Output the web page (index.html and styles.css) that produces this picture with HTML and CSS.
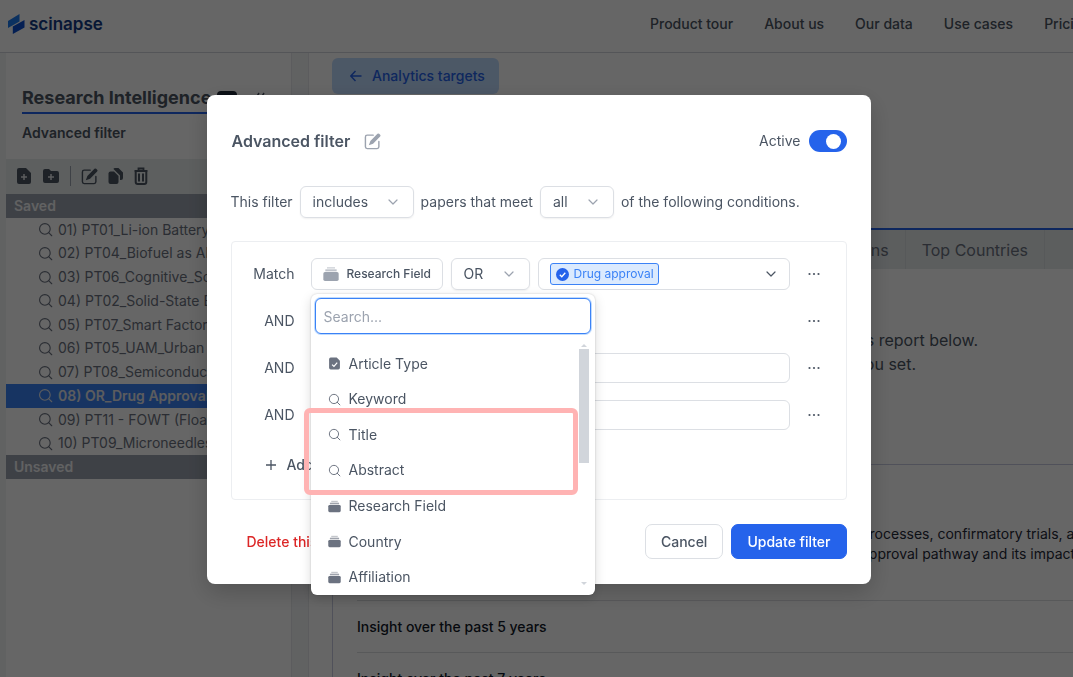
FILE: index.html
```html
<!DOCTYPE html>
<html lang="en">
<head>
    <meta charset="utf-8">
    <title>Scinapse - Research Intelligence</title>
    <link rel="stylesheet" href="styles.css">
</head>
<body>
    <!-- Shared icons -->
    <svg class="sprite" aria-hidden="true">
        <symbol id="i-search" viewBox="0 0 24 24">
            <circle cx="11" cy="11" r="8.500" fill="none" stroke="currentColor" stroke-width="1.800"/>
            <path d="M17 17l5 5" fill="none" stroke="currentColor" stroke-width="1.800" stroke-linecap="round"/>
        </symbol>
        <symbol id="i-chevron" viewBox="0 0 24 24">
            <path d="M4 8l8 8 8-8" fill="none" stroke="currentColor" stroke-width="2.400" stroke-linecap="round" stroke-linejoin="round"/>
        </symbol>
        <symbol id="i-stack" viewBox="0 0 24 24">
            <path d="M6 1.500h12v2.500H6z" fill="currentColor" opacity=".4"/>
            <path d="M3.500 5h17v3h-17z" fill="currentColor" opacity=".65"/>
            <path d="M3 9h18q2.500 0 2.500 2.500v8.500q0 2.500-2.500 2.500H3Q.5 22.500.5 20v-8.500Q.5 9 3 9z" fill="currentColor"/>
        </symbol>
        <symbol id="i-edit" viewBox="0 0 24 24">
            <path d="M13 3H4.500Q2 3 2 5.500v14Q2 22 4.500 22h14q2.500 0 2.500-2.500V12" fill="none" stroke="currentColor" stroke-width="2" stroke-linecap="round"/>
            <path d="M19 1.200q1.200-1.200 2.400 0l1.400 1.400q1.200 1.200 0 2.400L12.800 15l-6 2.200L9 11.200z" fill="currentColor"/>
        </symbol>
        <symbol id="i-dots" viewBox="0 0 24 24">
            <circle cx="3" cy="12" r="2.200" fill="currentColor"/>
            <circle cx="12" cy="12" r="2.200" fill="currentColor"/>
            <circle cx="21" cy="12" r="2.200" fill="currentColor"/>
        </symbol>
    </svg>

    <header class="topbar">
        <a class="logo" href="#">
            <svg width="17" height="20" viewBox="0 0 17 20">
                <path d="M0 7L11.500 0v7.500L0 14z" fill="#1d7bf0"/>
                <path d="M16.500 6v7.500L4.800 20v-7.500z" fill="#0a4fd0"/>
            </svg>
            <span>scinapse</span>
        </a>
        <nav class="topnav">
            <a href="#">Product tour</a>
            <a href="#">About us</a>
            <a href="#">Our data</a>
            <a href="#">Use cases</a>
            <a href="#">Pricing</a>
        </nav>
    </header>

    <div class="page">
        <aside class="sidebar">
            <div class="side-head">
                <h2>Research Intelligence <span class="badge"></span> <svg class="collapse" width="10" height="12" viewBox="0 0 10 12"><path d="M4 1L1 6l3 5M9 1L6 6l3 5" fill="none" stroke="currentColor" stroke-width="1.500"/></svg></h2>
                <h3>Advanced filter</h3>
            </div>
            <div class="toolbar">
                <button aria-label="New filter">
                    <svg width="16" height="18" viewBox="0 0 16 18"><path d="M3 1h7l5 5v9q0 2-2 2H3q-2 0-2-2V3q0-2 2-2z" fill="currentColor"/><path d="M8 7v6M5 10h6" stroke="#e5e7eb" stroke-width="1.500"/></svg>
                </button>
                <button aria-label="New folder">
                    <svg width="18" height="18" viewBox="0 0 18 18"><path d="M3 2h4l2 2h6q2 0 2 2v8q0 2-2 2H3q-2 0-2-2V4q0-2 2-2z" fill="currentColor"/><path d="M9 7v6M6 10h6" stroke="#e5e7eb" stroke-width="1.500"/></svg>
                </button>
                <span class="divider"></span>
                <button aria-label="Rename"><svg width="17" height="17"><use href="#i-edit"/></svg></button>
                <button aria-label="Duplicate">
                    <svg width="16" height="18" viewBox="0 0 16 18"><path d="M2.500 4.500H6l4.500 4.500v6q0 2-2 2h-6q-2 0-2-2v-8.500q0-2 2-2z" fill="currentColor"/><path d="M5.500 2q0-1 1.500-1h3.500L15 5.500V11q0 2-2 2h-1V8.500z" fill="currentColor"/></svg>
                </button>
                <button aria-label="Delete">
                    <svg width="14" height="18" viewBox="0 0 14 18"><path d="M.5 4h13M4.500 3.500V1.500h5v2" fill="none" stroke="currentColor" stroke-width="1.800"/><path d="M1.700 5v10q0 2 2 2h6.600q2 0 2-2V5M5 6.500v8M9 6.500v8" fill="none" stroke="currentColor" stroke-width="2"/></svg>
                </button>
            </div>
            <ul class="filters">
                <li class="group">Saved</li>
                <li><svg><use href="#i-search"/></svg>01) PT01_Li-ion Battery</li>
                <li><svg><use href="#i-search"/></svg>02) PT04_Biofuel as Alternative</li>
                <li><svg><use href="#i-search"/></svg>03) PT06_Cognitive_Science</li>
                <li><svg><use href="#i-search"/></svg>04) PT02_Solid-State Battery</li>
                <li><svg><use href="#i-search"/></svg>05) PT07_Smart Factory</li>
                <li><svg><use href="#i-search"/></svg>06) PT05_UAM_Urban Air</li>
                <li><svg><use href="#i-search"/></svg>07) PT08_Semiconductor</li>
                <li class="selected"><svg><use href="#i-search"/></svg>08) OR_Drug Approval</li>
                <li><svg><use href="#i-search"/></svg>09) PT11 - FOWT (Floating)</li>
                <li><svg><use href="#i-search"/></svg>10) PT09_Microneedles</li>
                <li class="group">Unsaved</li>
            </ul>
        </aside>

        <main class="report">
            <a class="back" href="#">
                <svg width="12" height="12" viewBox="0 0 12 12"><path d="M11.500 6H1M5.500 1L.8 6l4.700 5" fill="none" stroke="currentColor" stroke-width="1.400"/></svg>
                Analytics targets
            </a>
            <div class="tabs">
                <a href="#">Top Institutions</a>
                <a href="#">Top Countries</a>
                <span class="tab-end"></span>
            </div>
            <div class="intro">
                <p class="line-one">this report below.</p>
                <p class="line-two">you set.</p>
            </div>
            <section class="insights">
                <p class="summary">processes, confirmatory trials, and<br>approval pathway and its impact on</p>
                <h4>Insight over the past 5 years</h4>
                <h4>Insight over the past 7 years</h4>
            </section>
        </main>
    </div>

    <div class="overlay">
        <form class="modal" role="dialog" aria-label="Advanced filter">
            <div class="modal-head">
                <h1>Advanced filter</h1>
                <button type="button" class="icon-btn" aria-label="Edit name"><svg width="17" height="17"><use href="#i-edit"/></svg></button>
                <label class="active-label" for="active">Active</label>
                <input class="toggle" type="checkbox" id="active" checked>
            </div>

            <div class="sentence">
                <label for="mode">This filter</label>
                <span class="select mode">
                    <select id="mode"><option>includes</option><option>excludes</option></select>
                    <svg><use href="#i-chevron"/></svg>
                </span>
                <label for="meet">papers that meet</label>
                <span class="select meet">
                    <select id="meet"><option>all</option><option>any</option></select>
                    <svg><use href="#i-chevron"/></svg>
                </span>
                <span>of the following conditions.</span>
            </div>

            <div class="conditions">
                <div class="row">
                    <span class="join">Match</span>
                    <div class="field-wrap">
                        <button type="button" class="field"><svg width="16" height="16"><use href="#i-stack"/></svg>Research Field</button>

                        <div class="dropdown">
                            <input type="text" placeholder="Search..." aria-label="Search fields">
                            <div class="options">
                                <div class="option-list">
                                    <button type="button"><svg viewBox="0 0 24 24"><path d="M5 1h11l6 6v13q0 3-3 3H5q-3 0-3-3V4q0-3 3-3z" fill="currentColor"/><path d="M7.500 14l3.500 3.500 6-7" fill="none" stroke="#fff" stroke-width="2.200"/></svg>Article Type</button>
                                    <button type="button"><svg><use href="#i-search"/></svg>Keyword</button>
                                    <button type="button"><svg><use href="#i-search"/></svg>Title</button>
                                    <button type="button"><svg><use href="#i-search"/></svg>Abstract</button>
                                    <button type="button"><svg><use href="#i-stack"/></svg>Research Field</button>
                                    <button type="button"><svg><use href="#i-stack"/></svg>Country</button>
                                    <button type="button"><svg><use href="#i-stack"/></svg>Affiliation</button>
                                </div>
                                <div class="scrollbar">
                                    <span class="arrow up"></span>
                                    <span class="thumb"></span>
                                    <span class="arrow down"></span>
                                </div>
                            </div>
                            <div class="highlight"></div>
                        </div>
                    </div>
                    <span class="select op">
                        <select aria-label="Operator"><option>OR</option><option>AND</option></select>
                        <svg><use href="#i-chevron"/></svg>
                    </span>
                    <button type="button" class="values">
                        <span class="tag">
                            <svg width="13" height="13" viewBox="0 0 13 13"><circle cx="6.500" cy="6.500" r="6.500" fill="#2563eb"/><path d="M3.800 6.800l2 2 3.500-4" fill="none" stroke="#fff" stroke-width="1.300"/></svg>
                            Drug approval
                        </span>
                        <svg class="caret"><use href="#i-chevron"/></svg>
                    </button>
                    <button type="button" class="more" aria-label="More"><svg><use href="#i-dots"/></svg></button>
                </div>
                <div class="row">
                    <span class="join">AND</span>
                    <button type="button" class="more" aria-label="More"><svg><use href="#i-dots"/></svg></button>
                </div>
                <div class="row">
                    <span class="join">AND</span>
                    <input class="text" type="text" aria-label="Third condition">
                    <button type="button" class="more" aria-label="More"><svg><use href="#i-dots"/></svg></button>
                </div>
                <div class="row">
                    <span class="join">AND</span>
                    <input class="text" type="text" aria-label="Fourth condition">
                    <button type="button" class="more" aria-label="More"><svg><use href="#i-dots"/></svg></button>
                </div>
                <button type="button" class="add">
                    <svg width="10" height="10" viewBox="0 0 10 10"><path d="M5 0v10M0 5h10" stroke="currentColor" stroke-width="1.300"/></svg>
                    Add condition
                </button>
            </div>

            <div class="modal-foot">
                <button type="button" class="delete">Delete this filter</button>
                <button type="button" class="btn">Cancel</button>
                <button type="submit" class="btn primary">Update filter</button>
            </div>
        </form>
    </div>
</body>
</html>
```
FILE: styles.css
```css
* {
    box-sizing: border-box;
}

body {
    margin: 0;
    height: 100vh;
    overflow: hidden;
    font-family: Inter, "Liberation Sans", sans-serif;
    font-size: 14px;
    line-height: 20px;
    color: #4b5563;
    background: #f3f4f6;
}

h1, h2, h3, h4, p, ul {
    margin: 0;
    padding: 0;
}

a {
    color: inherit;
    text-decoration: none;
}

button, input, select {
    font: inherit;
    color: inherit;
    margin: 0;
}

button {
    padding: 0;
    border: 0;
    background: none;
}

svg {
    flex: none;
}

.sprite {
    display: none;
}

/* Top bar */
.topbar {
    display: flex;
    height: 53px;
    align-items: center;
    padding-bottom: 4px;
    background: white;
    border-bottom: 1px solid #d1d5db;
}

.logo {
    display: flex;
    flex: 0 0 642px;
    align-items: center;
    gap: 4px;
    margin-right: 8px;
    padding-left: 8px;
    font-size: 17px;
    font-weight: 600;
    color: #123a85;
}

.topnav {
    display: flex;
    gap: 31px;
    font-weight: 500;
    color: #4b5563;
    white-space: nowrap;
}

/* Page */
.page {
    display: flex;
    height: calc(100vh - 53px);
    padding-left: 6px;
    gap: 16px;
}

.sidebar {
    flex: 0 0 286px;
    background: white;
    border-right: 1px solid #e5e7eb;
}

.side-head {
    padding: 32px 16px 0;
    height: 106px;
}

.side-head h2 {
    display: flex;
    align-items: center;
    gap: 6px;
    padding-bottom: 1px;
    border-bottom: 2px solid #2563eb;
    font-size: 18px;
    line-height: 26px;
    white-space: nowrap;
    color: #4b5563;
}

.side-head h3 {
    padding-top: 9px;
    font-size: 14px;
    font-weight: 600;
}

.badge {
    width: 20px;
    height: 14px;
    border-radius: 4px;
    background: #1f2937;
}

.collapse {
    margin-left: 12px;
}

.toolbar {
    display: flex;
    align-items: center;
    gap: 10px;
    height: 35px;
    padding: 0 0 1px 10px;
    background: #e9eeee;
}

.toolbar button {
    display: flex;
}

.divider {
    width: 1px;
    height: 20px;
    background: #9ca3af;
}

.filters {
    display: grid;
    grid-auto-rows: 1fr;
    min-height: 285px;
    list-style: none;
    font-size: 14px;
}

.filters li {
    display: flex;
    align-items: center;
    gap: 5px;
    padding-left: 32px;
    overflow: hidden;
    white-space: nowrap;
    color: #6b7280;
}

.filters svg {
    width: 15px;
    height: 15px;
}

.filters .group {
    padding-left: 8px;
    font-weight: 600;
    color: #f3f4f6;
    background: #9ca3af;
}

.filters .selected {
    font-weight: 600;
    color: #e5e7eb;
    background: #3b82f6;
}

.report {
    display: flex;
    flex-direction: column;
    flex: 1;
    min-width: 0;
    padding-left: 23px;
    overflow: hidden;
    background: white;
    border-left: 1px solid #e5e7eb;
}

.back {
    display: flex;
    flex: none;
    align-self: flex-start;
    align-items: center;
    gap: 10px;
    height: 36px;
    margin-top: 5px;
    padding: 0 14px 0 18px;
    border-radius: 6px;
    font-weight: 500;
    color: #2563eb;
    background: #bfdbfe;
}

.tabs {
    display: flex;
    flex: none;
    justify-content: flex-end;
    height: 41px;
    margin-top: 134px;
    border-top: 2px solid #2563eb;
    background: #e5eaec;
    font-size: 16px;
    line-height: 40px;
    color: #6b7280;
}

.tabs a {
    padding: 0 16px;
    border-right: 1px solid #dadfe2;
}

.tab-end {
    width: 28px;
}

.intro {
    padding-top: 59px;
    font-size: 16px;
    line-height: 24px;
    text-align: right;
}

.line-one {
    padding-right: 95px;
}

.line-two {
    padding-right: 157px;
}

.insights {
    flex: none;
    margin-top: 88px;
    padding-left: 24px;
    border-top: 1px solid #c7cbe0;
    border-left: 1px solid #c7cbe0;
    color: #1f2937;
    white-space: nowrap;
}

.summary {
    height: 135px;
    padding: 59px 0 0 504px;
}

.insights h4 {
    padding: 16px 0 15px;
    border-top: 1px solid #dcdee2;
    font-weight: 500;
    color: #111827;
}

/* Modal */
.overlay {
    position: fixed;
    inset: 0;
    display: flex;
    align-items: center;
    justify-content: center;
    padding: 2px 0 0 4px;
    background: rgba(0, 0, 0, 0.6);
}

.modal {
    width: 100%;
    max-width: 664px;
    padding: 24px 24px 25px;
    border-radius: 8px;
    background: white;
    box-shadow: 0 8px 24px rgba(0, 0, 0, 0.2);
}

.modal-head {
    display: flex;
    align-items: center;
    height: 44px;
}

.modal-head h1 {
    padding-left: 1px;
    font-size: 16px;
    font-weight: 600;
}

.icon-btn {
    display: flex;
    margin-left: 14px;
    color: #9ca3af;
}

.active-label {
    margin-left: auto;
    margin-right: 8px;
}

.toggle {
    appearance: none;
    display: flex;
    align-items: center;
    justify-content: flex-end;
    width: 38px;
    height: 22px;
    padding-right: 6px;
    border-radius: 11px;
    background: #2563eb;
}

.toggle::before {
    content: "";
    width: 15px;
    height: 15px;
    border-radius: 50%;
    background: white;
}

.sentence {
    display: flex;
    align-items: center;
    gap: 7px;
    margin-top: 23px;
}

.select {
    display: grid;
    align-items: center;
    height: 32px;
    border: 1px solid #dcdfe4;
    border-radius: 6px;
    box-shadow: 0 1px 2px rgba(0, 0, 0, 0.06);
}

.select select {
    grid-area: 1 / 1;
    appearance: none;
    width: 100%;
    height: 30px;
    padding: 0 12px;
    border: 0;
    background: none;
}

.select svg {
    grid-area: 1 / 1;
    justify-self: end;
    width: 12px;
    height: 12px;
    margin-right: 14px;
    color: #9ca3af;
    pointer-events: none;
}

.mode {
    width: 114px;
}

.meet {
    width: 74px;
}

.op {
    width: 79px;
}

.conditions {
    display: flex;
    flex-direction: column;
    gap: 15px;
    margin-top: 23px;
    padding: 16px;
    border: 1px solid #eceef1;
    border-radius: 4px;
}

.row {
    display: flex;
    align-items: center;
    gap: 8px;
    min-height: 32px;
}

.join {
    width: 47px;
    margin-right: 8px;
    text-align: right;
}

.field-wrap {
    position: relative;
}

.field {
    display: flex;
    align-items: center;
    gap: 8px;
    width: 132px;
    height: 32px;
    padding-left: 11px;
    border: 1px solid #dcdfe4;
    border-radius: 6px;
    font-size: 12px;
    font-weight: 500;
    white-space: nowrap;
}

.field svg {
    color: #9ca3af;
}

.values {
    display: flex;
    flex: 1;
    align-items: center;
    justify-content: space-between;
    height: 32px;
    padding: 0 12px 0 11px;
    border: 1px solid #dcdfe4;
    border-radius: 6px;
}

.tag {
    display: flex;
    align-items: center;
    gap: 5px;
    height: 22px;
    padding: 0 4px 0 5px;
    border: 1px solid #3b82f6;
    border-radius: 3px;
    font-size: 12px;
    color: #3b82f6;
    background: #dbeafe;
}

.caret {
    width: 12px;
    height: 12px;
}

.more {
    display: flex;
    align-items: center;
    justify-content: center;
    width: 32px;
    height: 32px;
    margin-left: auto;
}

.more svg {
    width: 12px;
    height: 12px;
}

.text {
    flex: 1;
    min-width: 0;
    height: 30px;
    border: 1px solid #dcdfe4;
    border-radius: 6px;
}

.add {
    display: flex;
    align-items: center;
    align-self: flex-start;
    gap: 11px;
    height: 37px;
    padding-left: 18px;
    font-weight: 500;
}

.modal-foot {
    display: flex;
    align-items: center;
    gap: 8px;
    margin-top: 24px;
}

.delete {
    margin: 0 auto 0 16px;
    font-weight: 500;
    color: #dc2626;
}

.btn {
    height: 35px;
    padding: 0 15px;
    border: 1px solid #dcdfe4;
    border-radius: 7px;
    font-weight: 500;
}

.primary {
    border-color: #2563eb;
    color: white;
    background: #2563eb;
}

/* Field menu */
.dropdown {
    position: absolute;
    top: 36px;
    left: 0;
    width: 284px;
    padding: 4px 4px 0;
    border-radius: 6px;
    background: white;
    box-shadow: 0 0 2px rgba(0, 0, 0, 0.2), 0 4px 12px rgba(0, 0, 0, 0.15);
}

.dropdown input {
    display: block;
    width: 100%;
    height: 36px;
    padding: 0 8px;
    border: 1px solid #3b82f6;
    border-radius: 6px;
    outline: 0;
    box-shadow: 0 0 0 1px #bfdbfe;
}

.dropdown input::placeholder {
    color: #9ca3af;
}

.options {
    display: flex;
    padding-top: 8px;
}

.option-list {
    display: grid;
    flex: 1;
    grid-auto-rows: 1fr;
    min-height: 253px;
    padding-top: 4px;
}

.option-list button {
    display: flex;
    align-items: center;
    gap: 8px;
    padding-left: 13px;
    text-align: left;
}

.option-list svg {
    width: 13px;
    height: 13px;
    color: #6b7280;
}

.scrollbar {
    display: flex;
    flex-direction: column;
    align-items: center;
    width: 10px;
    margin-right: 2px;
}

.arrow {
    border: 3px solid transparent;
}

.up {
    margin: 2px 0;
    border-top: 0;
    border-bottom-color: #d1d5db;
}

.down {
    margin: auto 0 10px;
    border-top-color: #d1d5db;
    border-bottom: 0;
}

.thumb {
    width: 10px;
    height: 114px;
    background: #d1d5db;
}

/* Callout round the new options */
.highlight {
    position: absolute;
    top: 114px;
    left: -7px;
    width: 274px;
    height: 87px;
    border: 5px solid #ffb3b3;
    border-radius: 6px;
}
```
